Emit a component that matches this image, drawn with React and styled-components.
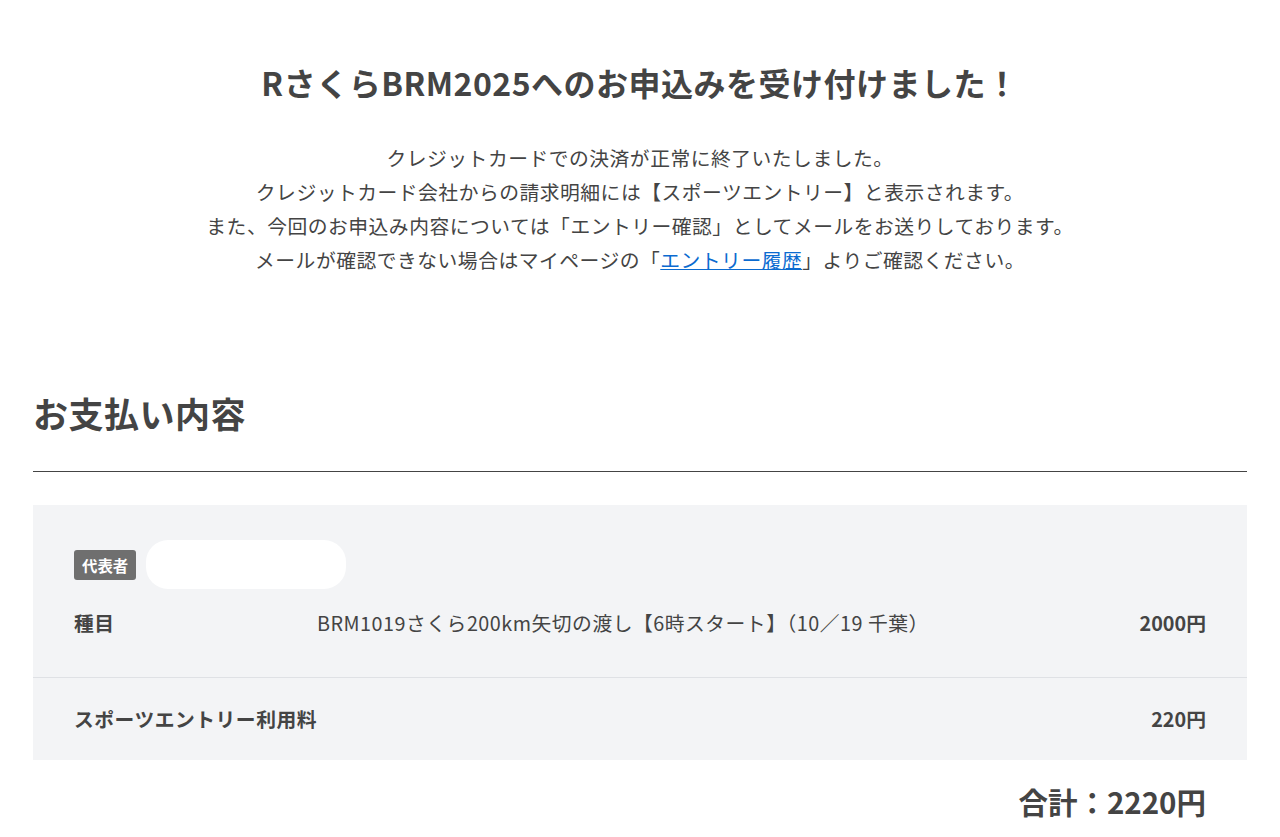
import React from 'react';
import styled, { createGlobalStyle } from 'styled-components';

const GlobalStyle = createGlobalStyle`
  html, body {
    margin: 0;
    padding: 0;
    background: #fff;
  }
  body {
    font-family: "Noto Sans CJK JP", "Noto Sans", sans-serif;
    color: #444;
    letter-spacing: 0.5px;
  }
`;

const Page = styled.div`
  width: 1214px;
  margin: 0 auto;
  padding-top: 58px;
`;

const Title = styled.h1`
  margin: 0;
  font-size: 32px;
  line-height: 48px;
  font-weight: 700;
  text-align: center;
`;

const Message = styled.div`
  margin-top: 35px;
  font-size: 19.8px;
  line-height: 34px;
  text-align: center;
`;

const Line = styled.p`
  margin: 0;
`;

const HistoryLink = styled.a`
  color: #0b6bd0;
  text-decoration: underline;
`;

const SectionHeading = styled.h2`
  margin: 112px 0 0;
  padding-bottom: 34px;
  font-size: 35px;
  line-height: 48px;
  font-weight: 700;
  border-bottom: 1px solid #444;
`;

const Summary = styled.div`
  margin-top: 33px;
  background: #f3f4f6;
`;

const Block = styled.div`
  padding: ${p => p.$pad};
  & + & {
    border-top: 1px solid #dfe1e5;
  }
`;

const Representative = styled.div`
  display: flex;
  align-items: center;
  gap: 10px;
  height: 49px;
`;

const Badge = styled.span`
  display: inline-flex;
  align-items: center;
  justify-content: center;
  height: 30px;
  padding: 0 8px;
  border-radius: 3px;
  background: #6f6f6f;
  color: #fff;
  font-size: 15.4px;
  font-weight: 700;
  letter-spacing: 0;
`;

const NamePill = styled.span`
  display: block;
  width: 200px;
  height: 49px;
  border-radius: 22px;
  background: #fff;
`;

const Row = styled.div`
  display: flex;
  align-items: center;
  margin-top: ${p => p.$top || 0}px;
  font-size: 19.8px;
  line-height: 34px;
`;

const Label = styled.span`
  width: 243px;
  flex-shrink: 0;
  font-weight: 700;
`;

const Detail = styled.span`
  flex: 1;
`;

const Price = styled.span`
  font-weight: 700;
  letter-spacing: 0;
`;

const Total = styled.div`
  margin-top: 20px;
  padding-right: 41px;
  text-align: right;
  font-size: 29.5px;
  line-height: 42px;
  font-weight: 700;
  letter-spacing: 0;
`;

export default function App() {
  return (
    <>
      <GlobalStyle />
      <Page>
        <Title>RさくらBRM2025へのお申込みを受け付けました！</Title>
        <Message>
          <Line>クレジットカードでの決済が正常に終了いたしました。</Line>
          <Line>クレジットカード会社からの請求明細には【スポーツエントリー】と表示されます。</Line>
          <Line>また、今回のお申込み内容については「エントリー確認」としてメールをお送りしております。</Line>
          <Line>
            メールが確認できない場合はマイページの「<HistoryLink href="#">エントリー履歴</HistoryLink>」よりご確認ください。
          </Line>
        </Message>

        <SectionHeading>お支払い内容</SectionHeading>

        <Summary>
          <Block $pad="35px 41px 37px">
            <Representative>
              <Badge>代表者</Badge>
              <NamePill />
            </Representative>
            <Row $top={17}>
              <Label>種目</Label>
              <Detail>BRM1019さくら200km矢切の渡し【6時スタート】（10／19 千葉）</Detail>
              <Price>2000円</Price>
            </Row>
          </Block>
          <Block $pad="24px 41px">
            <Row>
              <Label>スポーツエントリー利用料</Label>
              <Detail />
              <Price>220円</Price>
            </Row>
          </Block>
        </Summary>

        <Total>合計：2220円</Total>
      </Page>
    </>
  );
}
